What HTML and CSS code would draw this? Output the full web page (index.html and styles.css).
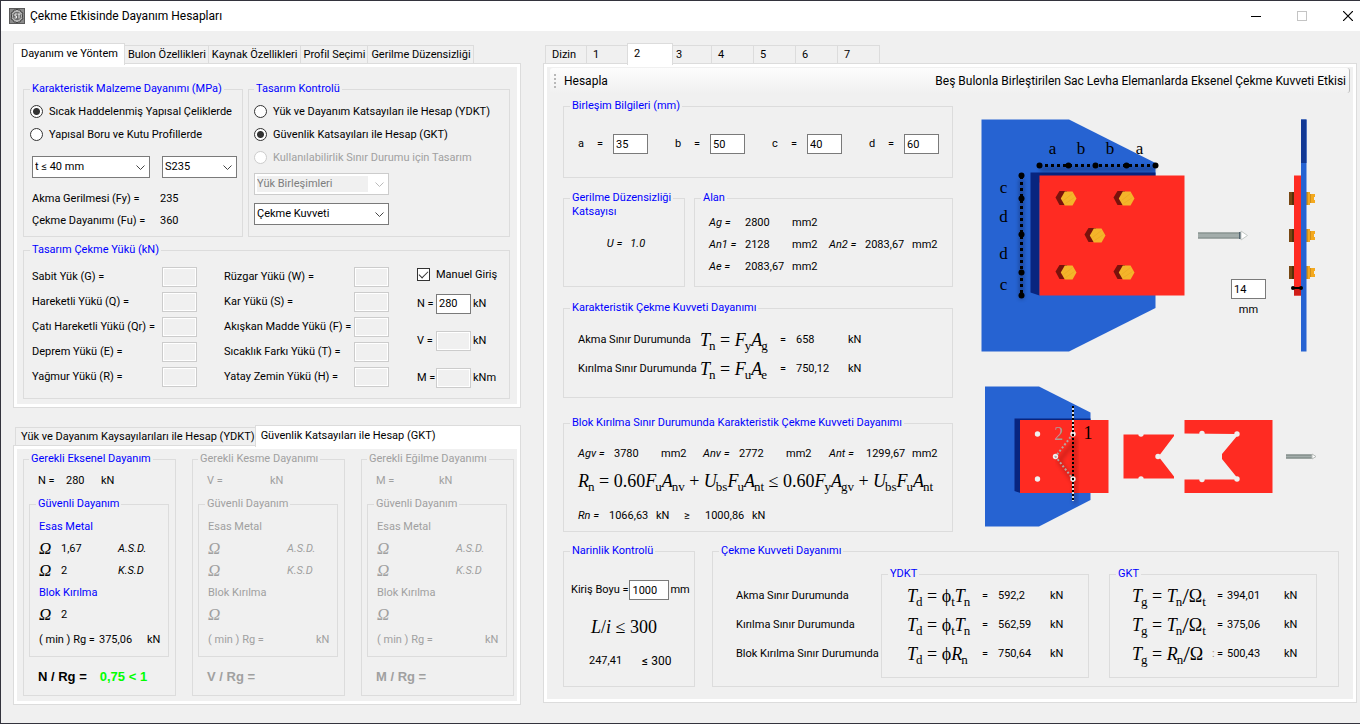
FILE: index.html
```html
<!DOCTYPE html>
<html lang="tr">
<head>
<meta charset="utf-8">
<title>Çekme Etkisinde Dayanım Hesapları</title>
<link rel="stylesheet" href="styles.css">
</head>
<body>
<div class="window">
  <header class="titlebar">
    <svg class="app-icon" width="16" height="16" viewBox="0 0 16 16" aria-hidden="true">
      <rect x="0.5" y="0.5" width="15" height="15" fill="#8a8a8a" stroke="#5a5a5a"/>
      <path d="M5 2h2l1-1 1 1h2l1 2 2 1-1 2 1 1-1 1 1 2-2 1-1 2H9l-1 1-1-1H5l-1-2-2-1 1-2-1-1 1-1-1-2 2-1z" fill="#b5b5b5" stroke="#444"/>
      <circle cx="8" cy="8" r="4" fill="#666"/>
      <path d="M8 6H6v2h1.500v2H5.500M8.500 6h3M10 6v4.500" fill="none" stroke="#eee"/>
    </svg>
    <h1 class="title">Çekme Etkisinde Dayanım Hesapları</h1>
    <div class="window-buttons">
      <button aria-label="Simge durumuna küçült"><svg width="10" height="10"><path d="M0 5.500h10" stroke="#000"/></svg></button>
      <button aria-label="Ekranı kapla" disabled><svg width="10" height="10"><rect x="0.5" y="0.5" width="9" height="9" fill="none" stroke="#c4c4c4"/></svg></button>
      <button aria-label="Kapat"><svg width="10" height="10"><path d="M0 0l10 10M10 0L0 10" stroke="#000" stroke-width="1.200"/></svg></button>
    </div>
  </header>

  <main class="workspace">
    <div class="left-column">
      <section class="tabbed">
        <div class="tabs" role="tablist">
          <button class="tab active" role="tab" aria-selected="true">Dayanım ve Yöntem</button>
          <button class="tab" role="tab">Bulon Özellikleri</button>
          <button class="tab" role="tab">Kaynak Özellikleri</button>
          <button class="tab" role="tab">Profil Seçimi</button>
          <button class="tab" role="tab">Gerilme Düzensizliği</button>
        </div>
        <div class="panel method-panel">
          <div class="method-row">
            <fieldset class="group material">
              <legend>Karakteristik Malzeme Dayanımı (MPa)</legend>
              <label class="option"><input type="radio" name="material" checked>Sıcak Haddelenmiş Yapısal Çeliklerde</label>
              <label class="option"><input type="radio" name="material">Yapısal Boru ve Kutu Profillerde</label>
              <div class="material-selects">
                <span class="select thick"><select aria-label="Kalınlık"><option>t ≤ 40 mm</option></select><svg width="9" height="5"><path d="M0.500 0.500l4 4 4-4" fill="none" stroke="#444"/></svg></span>
                <span class="select grade"><select aria-label="Çelik sınıfı"><option>S235</option></select><svg width="9" height="5"><path d="M0.500 0.500l4 4 4-4" fill="none" stroke="#444"/></svg></span>
              </div>
              <dl class="material-values">
                <dt>Akma Gerilmesi (Fy) =</dt><dd>235</dd>
                <dt>Çekme Dayanımı (Fu) =</dt><dd>360</dd>
              </dl>
            </fieldset>
            <fieldset class="group design">
              <legend>Tasarım Kontrolü</legend>
              <label class="option"><input type="radio" name="design">Yük ve Dayanım Katsayıları ile Hesap (YDKT)</label>
              <label class="option"><input type="radio" name="design" checked>Güvenlik Katsayıları ile Hesap (GKT)</label>
              <label class="option off"><input type="radio" name="design" disabled>Kullanılabilirlik Sınır Durumu için Tasarım</label>
              <div class="design-selects">
                <span class="select off"><select aria-label="Yük birleşimleri" disabled><option>Yük Birleşimleri</option></select><svg width="9" height="5"><path d="M0.500 0.500l4 4 4-4" fill="none" stroke="#bbb"/></svg></span>
                <span class="select"><select aria-label="Etki"><option>Çekme Kuvveti</option></select><svg width="9" height="5"><path d="M0.500 0.500l4 4 4-4" fill="none" stroke="#444"/></svg></span>
              </div>
            </fieldset>
          </div>
          <fieldset class="group loads">
            <legend>Tasarım Çekme Yükü (kN)</legend>
            <div class="load-layout">
              <div class="load-list">
                <label for="g">Sabit Yük (G) =</label><input id="g" disabled>
                <label for="q">Hareketli Yükü (Q) =</label><input id="q" disabled>
                <label for="qr">Çatı Hareketli Yükü (Qr) =</label><input id="qr" disabled>
                <label for="e">Deprem Yükü (E) =</label><input id="e" disabled>
                <label for="r">Yağmur Yükü (R) =</label><input id="r" disabled>
              </div>
              <div class="load-list">
                <label for="w">Rüzgar Yükü (W) =</label><input id="w" disabled>
                <label for="s">Kar Yükü (S) =</label><input id="s" disabled>
                <label for="f">Akışkan Madde Yükü (F) =</label><input id="f" disabled>
                <label for="t">Sıcaklık Farkı Yükü (T) =</label><input id="t" disabled>
                <label for="h">Yatay Zemin Yükü (H) =</label><input id="h" disabled>
              </div>
              <div class="manual">
                <label class="check"><input type="checkbox" checked>Manuel Giriş</label>
                <div class="manual-list">
                  <label for="n">N =</label><input id="n" value="280"><span>kN</span>
                  <label for="v">V =</label><input id="v" disabled><span>kN</span>
                  <label for="m">M =</label><input id="m" disabled><span>kNm</span>
                </div>
              </div>
            </div>
          </fieldset>
        </div>
      </section>

      <section class="tabbed">
        <div class="tabs results-tabs" role="tablist">
          <button class="tab" role="tab">Yük ve Dayanım Kaysayılarıları ile Hesap (YDKT)</button>
          <button class="tab active fill" role="tab" aria-selected="true">Güvenlik Katsayıları ile Hesap (GKT)</button>
        </div>
        <div class="panel results-panel">
          <fieldset class="group strength">
            <legend>Gerekli Eksenel Dayanım</legend>
            <div class="force"><span>N =</span><span>280</span><span>kN</span></div>
            <fieldset class="group safe">
              <legend>Güvenli Dayanım</legend>
              <div class="head">Esas Metal</div>
              <div class="factor"><i class="omega">Ω</i><span>1,67</span><i>A.S.D.</i></div>
              <div class="factor"><i class="omega">Ω</i><span>2</span><i>K.S.D</i></div>
              <div class="head">Blok Kırılma</div>
              <div class="factor"><i class="omega">Ω</i><span>2</span></div>
              <div class="minimum"><span>( min ) Rg =</span><span>375,06</span><span>kN</span></div>
            </fieldset>
            <div class="ratio"><span>N / Rg =</span><span class="pass">0,75 &lt; 1</span></div>
          </fieldset>
          <fieldset class="group strength" disabled>
            <legend>Gerekli Kesme Dayanımı</legend>
            <div class="force"><span>V =</span><span></span><span>kN</span></div>
            <fieldset class="group safe">
              <legend>Güvenli Dayanım</legend>
              <div class="head">Esas Metal</div>
              <div class="factor"><i class="omega">Ω</i><span></span><i>A.S.D.</i></div>
              <div class="factor"><i class="omega">Ω</i><span></span><i>K.S.D</i></div>
              <div class="head">Blok Kırılma</div>
              <div class="factor"><i class="omega">Ω</i></div>
              <div class="minimum"><span>( min ) Rg =</span><span></span><span>kN</span></div>
            </fieldset>
            <div class="ratio"><span>V / Rg =</span></div>
          </fieldset>
          <fieldset class="group strength" disabled>
            <legend>Gerekli Eğilme Dayanımı</legend>
            <div class="force"><span>M =</span><span></span><span>kN</span></div>
            <fieldset class="group safe">
              <legend>Güvenli Dayanım</legend>
              <div class="head">Esas Metal</div>
              <div class="factor"><i class="omega">Ω</i><span></span><i>A.S.D.</i></div>
              <div class="factor"><i class="omega">Ω</i><span></span><i>K.S.D</i></div>
              <div class="head">Blok Kırılma</div>
              <div class="factor"><i class="omega">Ω</i></div>
              <div class="minimum"><span>( min ) Rg =</span><span></span><span>kN</span></div>
            </fieldset>
            <div class="ratio"><span>M / Rg =</span></div>
          </fieldset>
        </div>
      </section>
    </div>

    <section class="tabbed right-column">
      <div class="tabs number-tabs" role="tablist">
        <button class="tab" role="tab">Dizin</button>
        <button class="tab" role="tab">1</button>
        <button class="tab active" role="tab" aria-selected="true">2</button>
        <button class="tab" role="tab">3</button>
        <button class="tab" role="tab">4</button>
        <button class="tab" role="tab">5</button>
        <button class="tab" role="tab">6</button>
        <button class="tab" role="tab">7</button>
      </div>
      <div class="panel joint-panel">
        <div class="toolbar">
          <span class="grip"></span>
          <button class="run">Hesapla</button>
          <span class="heading">Beş Bulonla Birleştirilen Sac Levha Elemanlarda Eksenel Çekme Kuvveti Etkisi</span>
        </div>
        <div class="joint">
          <div class="joint-top">
            <div class="joint-groups">
              <fieldset class="group dims">
                <legend>Birleşim Bilgileri (mm)</legend>
                <div class="dim-list">
                  <label>a<span>=</span><input value="35"></label>
                  <label>b<span>=</span><input value="50"></label>
                  <label>c<span>=</span><input value="40"></label>
                  <label>d<span>=</span><input value="60"></label>
                </div>
              </fieldset>
              <div class="area-row">
                <fieldset class="group lag">
                  <legend>Gerilme Düzensizliği</legend>
                  <div class="legend-more">Katsayısı</div>
                  <div class="lag-value"><i>U =</i><i>1.0</i></div>
                </fieldset>
                <fieldset class="group area">
                  <legend>Alan</legend>
                  <div class="area-grid">
                    <i>Ag =</i><span>2800</span><span>mm2</span><span></span><span></span><span></span>
                    <i>An1 =</i><span>2128</span><span>mm2</span><i>An2 =</i><span>2083,67</span><span>mm2</span>
                    <i>Ae =</i><span>2083,67</span><span>mm2</span>
                  </div>
                </fieldset>
              </div>
              <fieldset class="group tension">
                <legend>Karakteristik Çekme Kuvveti Dayanımı</legend>
                <div class="tension-row"><span>Akma Sınır Durumunda</span><span class="math"><i>T</i><sub>n</sub> = <i>F</i><sub>y</sub><i>A</i><sub>g</sub></span><span>=</span><span>658</span><span>kN</span></div>
                <div class="tension-row"><span>Kırılma Sınır Durumunda</span><span class="math"><i>T</i><sub>n</sub> = <i>F</i><sub>u</sub><i>A</i><sub>e</sub></span><span>=</span><span>750,12</span><span>kN</span></div>
              </fieldset>
              <fieldset class="group block">
                <legend>Blok Kırılma Sınır Durumunda Karakteristik Çekme Kuvveti Dayanımı</legend>
                <div class="block-areas"><i>Agv =</i><span>3780</span><span>mm2</span><i>Anv =</i><span>2772</span><span>mm2</span><i>Ant =</i><span>1299,67</span><span>mm2</span></div>
                <div class="math block-formula"><i>R</i><sub>n</sub> = 0.60<i>F</i><sub>u</sub><i>A</i><sub>nv</sub> + <i>U</i><sub>bs</sub><i>F</i><sub>u</sub><i>A</i><sub>nt</sub> ≤ 0.60<i>F</i><sub>y</sub><i>A</i><sub>gv</sub> + <i>U</i><sub>bs</sub><i>F</i><sub>u</sub><i>A</i><sub>nt</sub></div>
                <div class="block-result"><i>Rn =</i><span>1066,63</span><span>kN</span><span>≥</span><span>1000,86</span><span>kN</span></div>
              </fieldset>
            </div>

            <div class="figures">
              <svg class="figure-plate" width="350" height="260" viewBox="975 110 350 260" role="img" aria-label="Birleşim görünüşü">
                <defs>
                  <g id="bolt">
                    <path d="M-13-1l4-6.500h7l4 6-5 8h-6z" fill="#79120c"/>
                    <path d="M-7.700 0l4-7h7.700l4 7-4 7h-7.700z" fill="#f4b42a"/>
                    <path d="M-5 2l9-7M-3 5l9-6" stroke="#efab24" fill="none"/>
                  </g>
                  <g id="nut">
                    <path d="M-12-6.500h5v13h-5z" fill="#784712"/>
                    <path d="M-9-6.500h2v13h-2z" fill="#563009"/>
                    <path d="M5-6.500h4v2h5v3h-1v3h1v3h-5v2H5z" fill="#f4a91e"/>
                    <path d="M5-6.500h2v13H5zM9-4.500h1v9H9z" fill="#d08e1a"/>
                  </g>
                  <filter id="soft" x="-20%" y="-20%" width="140%" height="140%"><feGaussianBlur stdDeviation="2"/></filter>
                </defs>
                <path d="M981.500 119.500H1069L1155.500 163v145L1069 351.500h-87.500z" fill="#2663d2"/>
                <path d="M1030.500 172.500h125v10h-116v113l-9-3z" fill="#08257f"/>
                <path d="M1039.500 175.500h145v120h-145z" fill="#ff2b22"/>
                <g opacity="0.350" filter="url(#soft)" stroke="#001" stroke-width="4"><path d="M1021.500 179v120M1040 169h115"/></g>
                <g fill="none" stroke="#000" stroke-width="3" stroke-dasharray="3 3"><path d="M1039 165.500h117M1021.500 176v119"/></g>
                <g fill="#000">
                  <circle cx="1039.500" cy="165.500" r="3"/><circle cx="1068.500" cy="165.500" r="3"/><circle cx="1095.500" cy="165.500" r="3"/><circle cx="1126.500" cy="165.500" r="3"/><circle cx="1155.500" cy="165.500" r="3"/>
                  <circle cx="1021.500" cy="175.500" r="3"/><circle cx="1021.500" cy="198.500" r="3"/><circle cx="1021.500" cy="234.500" r="3"/><circle cx="1021.500" cy="272.500" r="3"/><circle cx="1021.500" cy="295.500" r="3"/>
                </g>
                <use href="#bolt" x="1068.500" y="198.500"/><use href="#bolt" x="1126.500" y="198.500"/><use href="#bolt" x="1097.500" y="235.500"/><use href="#bolt" x="1068.500" y="272.500"/><use href="#bolt" x="1126.500" y="272.500"/>
                <g class="dim-text">
                  <text x="1052.500" y="154">a</text><text x="1081" y="154">b</text><text x="1110" y="154">b</text><text x="1139.500" y="154">a</text>
                  <text x="1003.500" y="193">c</text><text x="1003.500" y="222">d</text><text x="1003.500" y="259">d</text><text x="1003.500" y="290">c</text>
                </g>
                <path d="M1198 232.500h42v6h-42z" fill="#a3adab"/>
                <path d="M1198 233h42M1198 238h42" stroke="#7c8784"/>
                <path d="M1239 232h2v7h-2z" fill="#536570"/>
                <path d="M1241 231l6.500 4.500-6.500 4.500z" fill="#fff" stroke="#c3c8c5"/>
                <use href="#nut" x="1301" y="198.500"/><use href="#nut" x="1301" y="235.500"/><use href="#nut" x="1301" y="272.500"/>
                <path d="M1301 119.500h5.500v232h-5.500z" fill="#2663d2"/>
                <path d="M1301 119.500h5.500V163h-5.500z" fill="#123894"/>
                <path d="M1294 175.500h7v120h-7z" fill="#ff2b22"/>
                <path d="M1294 289h7v6.500h-7z" fill="#cf1d17"/>
                <path d="M1293 288h9" stroke="#000" stroke-width="2"/><circle cx="1293" cy="288" r="2"/><circle cx="1301" cy="288" r="2"/>
              </svg>
              <label class="thickness"><input value="14">mm</label>
              <svg width="350" height="152" viewBox="975 380 350 152" role="img" aria-label="Kırılma çizgileri">
                <path d="M985 386.500h54l51.500 26V500l-51.500 26.500h-54z" fill="#2663d2"/>
                <path d="M1014.500 418.500h76v10h-70V493l-6-2z" fill="#08257f"/>
                <path d="M1020 420h88.500v73H1020z" fill="#ff2b22"/>
                <g opacity="0.300" filter="url(#soft)" stroke="#300" fill="none" stroke-width="3"><path d="M1075 437v67M1075 441l-16 20 15 21"/></g>
                <g fill="#f0f0f0"><circle cx="1037.500" cy="434" r="2.700"/><circle cx="1073" cy="434" r="2.700"/><circle cx="1055.500" cy="456.500" r="2.700"/><circle cx="1037.500" cy="479" r="2.700"/><circle cx="1073" cy="479" r="2.700"/></g>
                <path d="M1073 434l-17.500 22.500L1073 479" fill="none" stroke="#b4a5a1" stroke-width="2" stroke-dasharray="2 2"/>
                <path d="M1073 406v29M1073 479v22" stroke="#ddd" stroke-width="2"/>
                <path d="M1073 406v96" stroke="#000" stroke-width="2" stroke-dasharray="2 2"/>
                <text class="cut-text gray" x="1059" y="440">2</text><text class="cut-text" x="1088" y="439">1</text>
                <path d="M1123.500 434.500h50.500v1.500l-15.500 20.500 15.500 20v2h-50.500z" fill="#ff2b22"/>
                <path d="M1184.500 420h88v73h-88v-13.500h52.500v-2L1222 459v-5l15-18v-2l-52.500-.500z" fill="#ff2b22"/>
                <g fill="#f0f0f0"><circle cx="1141" cy="434" r="2.700"/><circle cx="1141" cy="479" r="2.700"/><circle cx="1158" cy="456.500" r="2.700"/><circle cx="1202" cy="433.500" r="2.700"/><circle cx="1237" cy="434" r="2.700"/><circle cx="1202" cy="479.500" r="2.700"/><circle cx="1237" cy="479" r="2.700"/></g>
                <path d="M1286 454.500h26v4h-26z" fill="#a3adab"/><path d="M1286 458h26" stroke="#737e7b"/><path d="M1286 455h26" stroke="#737e7b"/>
                <path d="M1312 454l4 2.500-4 2.500z" fill="#fff" stroke="#b4b9b6"/>
              </svg>
            </div>
          </div>

          <div class="joint-bottom">
            <fieldset class="group slender">
              <legend>Narinlik Kontrolü</legend>
              <label class="beam">Kiriş Boyu =<input value="1000">mm</label>
              <div class="math slender-formula"><i>L</i>/<i>i</i> ≤ 300</div>
              <div class="slender-value"><span>247,41</span><span class="limit">≤ 300</span></div>
            </fieldset>
            <fieldset class="group capacity">
              <legend>Çekme Kuvveti Dayanımı</legend>
              <div class="capacity-layout">
                <div class="capacity-labels"><span>Akma Sınır Durumunda</span><span>Kırılma Sınır Durumunda</span><span>Blok Kırılma Sınır Durumunda</span></div>
                <fieldset class="group ydkt">
                  <legend>YDKT</legend>
                  <div class="capacity-row"><span class="math"><i>T</i><sub>d</sub> = ϕ<sub class="after-symbol">t</sub><i>T</i><sub>n</sub></span><span>=</span><span>592,2</span><span>kN</span></div>
                  <div class="capacity-row"><span class="math"><i>T</i><sub>d</sub> = ϕ<sub class="after-symbol">t</sub><i>T</i><sub>n</sub></span><span>=</span><span>562,59</span><span>kN</span></div>
                  <div class="capacity-row"><span class="math"><i>T</i><sub>d</sub> = ϕ<i>R</i><sub>n</sub></span><span>=</span><span>750,64</span><span>kN</span></div>
                </fieldset>
                <fieldset class="group gkt">
                  <legend>GKT</legend>
                  <div class="capacity-row"><span class="math"><i>T</i><sub>g</sub> = <i>T</i><sub>n</sub><span class="slash">/</span>Ω<sub class="after-symbol">t</sub></span><span></span><span>=</span><span>394,01</span><span>kN</span></div>
                  <div class="capacity-row"><span class="math"><i>T</i><sub>g</sub> = <i>T</i><sub>n</sub><span class="slash">/</span>Ω<sub class="after-symbol">t</sub></span><span></span><span>=</span><span>375,06</span><span>kN</span></div>
                  <div class="capacity-row"><span class="math"><i>T</i><sub>g</sub> = <i>R</i><sub>n</sub><span class="slash">/</span>Ω</span><span class="colon">:</span><span>=</span><span>500,43</span><span>kN</span></div>
                </fieldset>
              </div>
            </fieldset>
          </div>
        </div>
      </div>
    </section>
  </main>
</div>
</body>
</html>
```
FILE: styles.css
```css
:root {
  --ui: "Roboto", "Liberation Sans", sans-serif;
  --math: "Liberation Serif", serif;
  --line: #dcdcdc;
  --face: #f0f0f0;
}

* { box-sizing: border-box; }

body {
  margin: 0;
  background: var(--face);
  color: #000;
  font: 11px/14px var(--ui);
}

button, input, select { font: inherit; color: inherit; margin: 0; }
button { border: 0; background: none; padding: 0; }

.window {
  min-height: 100vh;
  border: solid #33333d;
  border-width: 1px 0 1px 1px;
}

/* Title bar */
.titlebar {
  display: flex;
  align-items: center;
  height: 30px;
  padding-left: 8px;
  gap: 5px;
  background: #fff;
}
.title { margin: 0; font: 12px/16px var(--ui); }
.window-buttons { display: flex; margin-left: auto; }
.window-buttons button { width: 46px; height: 30px; display: flex; align-items: center; justify-content: center; }
.window-buttons button:last-child { width: 35px; padding-left: 10px; }

/* Page columns */
.workspace {
  display: grid;
  grid-template-columns: 508px minmax(0, 1fr);
  gap: 22px;
  padding: 12px 3px 0 12px;
  align-items: start;
}
.left-column { display: flex; flex-direction: column; gap: 17px; }

/* Tabs */
.tabs { display: flex; align-items: flex-end; height: 20px; padding-left: 2px; }
.tab {
  height: 18px;
  padding: 0 2px 0 3px;
  border: 1px solid var(--line);
  border-width: 1px 1px 0 0;
  text-align: left;
  white-space: nowrap;
}
.tab:first-child { border-left-width: 1px; }
.tab.active {
  height: 22px;
  margin: 0 0 -2px -1px;
  padding: 0 6px 2px;
  border-left-width: 1px;
  background: #fff;
  position: relative;
}
.tab.active:first-child { margin-left: -2px; padding-left: 7px; }
.tab.fill { flex: 1; margin-left: -3px; }
.number-tabs .tab { width: 42px; padding-left: 6px; }
.number-tabs .tab.active { width: 46px; margin: 0 -3px -2px -2px; }

.panel {
  border: 1px solid var(--line);
  box-shadow: inset 0 0 0 3px #fff;
}

/* Group boxes */
.group {
  min-width: 0;
  margin: 0;
  padding: 0;
  border: 1px solid var(--line);
}
.group > legend {
  margin-left: 6px;
  padding: 0 2px;
  line-height: 14px;
  color: #00f;
  white-space: nowrap;
}

.option { display: flex; align-items: center; gap: 6px; height: 23px; white-space: nowrap; }
.off { color: #a0a0a0; }

input[type="radio"] {
  appearance: none;
  flex: none;
  width: 13px;
  height: 13px;
  border: 1px solid #333;
  border-radius: 50%;
  background: #fff;
}
input[type="radio"]:checked { background: radial-gradient(circle, #333 0 3px, #fff 4px); }
input[type="radio"]:disabled { border-color: #ccc; }

input:not([type]) {
  width: 35px;
  height: 20px;
  padding: 0 2px;
  border: 1px solid #7a7a7a;
  background: #fff;
}
input:not([type]):disabled {
  border-color: #ccc;
  background: var(--face);
  box-shadow: inset 0 0 0 1px #fff;
}

.select { position: relative; display: block; }
.select select {
  appearance: none;
  width: 100%;
  height: 22px;
  padding: 0 18px 0 2px;
  border: 1px solid #7a7a7a;
  border-radius: 0;
  background: #fff;
}
.select svg { position: absolute; right: 5px; top: 9px; pointer-events: none; }
.select.off select {
  border-color: #ccc;
  color: #7d7d7d;
  opacity: 1;
  background: linear-gradient(var(--face), var(--face)) 2px 2px / calc(100% - 22px) 16px no-repeat #fff;
}

/* Method panel */
.method-panel { padding: 18px 10px 8px 9px; }
.method-row { display: grid; grid-template-columns: 220px 1fr; gap: 5px; margin-bottom: 6px; }
.material { padding: 4px 6px; }
.material > legend, .design > legend { margin-left: 0; }
.material-selects { display: grid; grid-template-columns: 118px 75px; gap: 12px; padding: 10px 0 10px 2px; }
.material-values { display: grid; grid-template-columns: 128px auto; grid-auto-rows: 22px; align-items: center; margin: 0; padding-left: 2px; }
.material-values dd { margin: 0; }
.design { padding: 4px 5px 0; }
.design-selects { display: grid; gap: 8px; width: 135px; padding-top: 4px; }

.load-layout { display: grid; grid-template-columns: 165px 166px auto; column-gap: 27px; padding: 7px 0 2px 8px; }
.load-list { display: grid; grid-template-columns: 130px 35px; grid-auto-rows: 25px; align-items: center; align-content: start; white-space: nowrap; }
.check { display: flex; align-items: center; gap: 6px; height: 21px; }
.check input {
  appearance: none;
  width: 13px;
  height: 13px;
  border: 1px solid #333;
  background: #fff;
  display: grid;
  place-items: center;
}
.check input:checked::before {
  content: "";
  width: 8px;
  height: 4px;
  margin-bottom: 2px;
  border: solid #333;
  border-width: 0 0 1px 1px;
  rotate: -45deg;
}
.manual-list { display: grid; grid-template-columns: 19px 35px auto; grid-auto-rows: 37px; align-items: center; white-space: nowrap; }
.manual-list span { padding-left: 2px; }

/* Results panel */
.results-tabs .tab { padding-left: 5px; }
.results-panel { display: grid; grid-template-columns: repeat(3, 153px); gap: 16px; padding: 6px 0 8px 9px; }
.strength { padding: 4px 6px 7px 5px; }
.strength > legend { margin-left: 0; }
.force { display: grid; grid-template-columns: 28px 35px auto; align-items: center; height: 22px; padding-left: 9px; margin-bottom: 5px; }
.safe { padding: 5px 0 2px 9px; }
.safe > legend { margin-left: -3px; }
.head { height: 22px; line-height: 22px; color: #00f; }
.factor { display: grid; grid-template-columns: 22px 57px auto; align-items: center; height: 22px; }
.omega { font: italic 17px/20px var(--math); }
.minimum { display: grid; grid-template-columns: 60px 48px auto; align-items: center; height: 28px; white-space: nowrap; }
.ratio { display: flex; align-items: center; gap: 13px; height: 22px; margin-top: 9px; padding-left: 9px; font: bold 13px/22px "Liberation Sans", sans-serif; }
.pass { color: #0f0; }
.strength:disabled, .strength:disabled legend, .strength:disabled .head { color: #a0a0a0; }

/* Joint panel */
.joint-panel { padding: 4px 6px 15px; }
.toolbar {
  display: flex;
  align-items: center;
  height: 25px;
  padding: 0 3px 0 4px;
  border-right: 1px solid #bbb;
  border-radius: 3px;
  background: linear-gradient(#fdfdfd, #f0f0f0);
  font: 12px/16px var(--ui);
}
.grip { width: 2px; height: 14px; margin-right: 8px; background: repeating-linear-gradient(#b8b8b8 0 2px, transparent 2px 4px); }
.heading { margin-left: auto; white-space: nowrap; }
.joint { padding: 6px 11px 0 13px; }
.joint-top { display: grid; grid-template-columns: 390px minmax(0, 1fr); column-gap: 22px; }
.dim-list { display: flex; gap: 27px; padding: 21px 0 23px 14px; }
.dim-list label { display: grid; grid-template-columns: 19px 16px 35px; align-items: center; }
.area-row { display: grid; grid-template-columns: 122px 1fr; gap: 9px; margin: 13px 0 14px; }
.lag .legend-more { padding-left: 8px; line-height: 13px; color: #00f; }
.lag-value { display: flex; justify-content: center; gap: 8px; padding: 19px 0 0 4px; }
.area-grid { display: grid; grid-template-columns: 36px 47px 37px 36px 47px auto; grid-auto-rows: 22px; align-items: center; padding: 7px 0 8px 14px; }
.tension { padding: 10px 14px 14px; }
.tension > legend, .block > legend { margin-left: -8px; }
.tension-row { display: grid; grid-template-columns: 122px 80px 16px 52px auto; align-items: center; height: 29px; white-space: nowrap; }
.block { margin-top: 18px; padding: 14px 14px 5px; }
.block-areas { display: grid; grid-template-columns: 36px 47px 42px 36px 47px 43px 37px 46px auto; align-items: center; height: 20px; }
.block-formula { height: 34px; padding-top: 5px; }
.block-result { display: grid; grid-template-columns: 31px 47px 28px 21px 47px auto; align-items: center; height: 20px; margin-top: 8px; }

.math { font: 18px/24px var(--math); white-space: nowrap; }
.math sub { margin-left: -1px; font-size: 13px; line-height: 0; vertical-align: -4px; }
.math .after-symbol { margin-left: 0; }
.slash { font-size: 24px; line-height: 0; vertical-align: -2px; }

/* Figures */
.figures { position: relative; padding-top: 11px; }
.figures svg { display: block; max-width: 100%; }
.figure-plate { margin-bottom: 10px; }
.thickness {
  position: absolute;
  left: 256px;
  top: 180px;
  display: grid;
  justify-items: center;
  gap: 4px;
}
.dim-text { font: 17px var(--math); text-anchor: middle; }
.cut-text { font: 18px var(--math); text-anchor: middle; }
.cut-text.gray { fill: #b09a95; }

/* Bottom row */
.joint-bottom { display: grid; grid-template-columns: 132px 1fr; gap: 17px; margin-top: 12px; }
.beam { display: flex; align-items: center; gap: 1px; padding: 22px 0 0 7px; white-space: nowrap; }
.beam input:not([type]) { width: 40px; }
.slender-formula { padding: 15px 0 11px 27px; }
.slender-value { display: flex; gap: 20px; padding-left: 25px; align-items: center; height: 22px; }
.limit { font-size: 12px; }
.capacity { padding-bottom: 8px; }
.capacity-layout { display: grid; grid-template-columns: 145px 208px 208px; padding: 9px 0 0 23px; }
.capacity-labels { display: grid; grid-auto-rows: 29px; align-items: center; align-content: start; padding-top: 14px; white-space: nowrap; }
.capacity-row { display: grid; align-items: center; height: 29px; }
.ydkt { padding: 0 0 9px 25px; }
.gkt { margin-left: 20px; margin-right: -20px; padding: 0 0 9px 22px; }
.ydkt > legend { margin-left: -19px; }
.gkt > legend { margin-left: -16px; }
.ydkt .capacity-row { grid-template-columns: 75px 16px 52px auto; }
.gkt .capacity-row { grid-template-columns: 80px 5px 10px 57px auto; }
.colon { color: #a08060; }
```
